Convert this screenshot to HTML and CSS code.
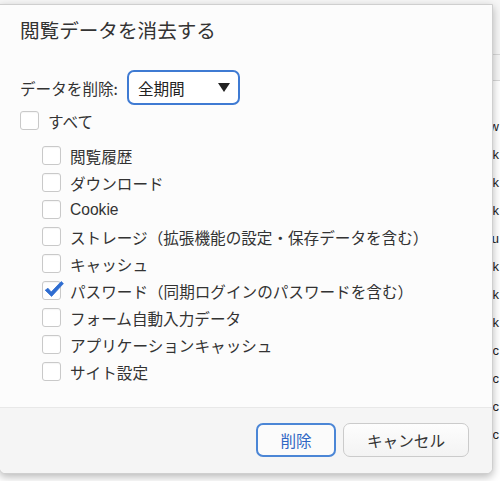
FILE: index.html
```html
<!DOCTYPE html>
<html lang="ja">
<head>
<meta charset="utf-8">
<link rel="stylesheet" href="styles.css">
</head>
<body>
<div class="page">
  <div class="page-top"></div>
  <div class="page-bar"></div>
  <div class="page-list">
    <div class="page-row">w</div>
    <div class="page-row">ck</div>
    <div class="page-row">ck</div>
    <div class="page-row">ck</div>
    <div class="page-row">u</div>
    <div class="page-row">ck</div>
    <div class="page-row">ck</div>
    <div class="page-row">ck</div>
    <div class="page-row">:c</div>
    <div class="page-row">:c</div>
    <div class="page-row">:c</div>
    <div class="page-row">:c</div>
  </div>
  <div class="page-url">https://ww</div>
</div>

<div class="dialog">
  <div class="dialog-body">
    <h1 class="title">閲覧データを消去する</h1>
    <div class="range">
      <span class="range-label">データを削除:</span>
      <div class="select"><span>全期間</span><span class="arrow"></span></div>
    </div>
    <label class="item all"><span class="box"></span><span>すべて</span></label>
    <div class="items">
      <label class="item"><span class="box"></span><span>閲覧履歴</span></label>
      <label class="item"><span class="box"></span><span>ダウンロード</span></label>
      <label class="item"><span class="box"></span><span class="latin">Cookie</span></label>
      <label class="item"><span class="box"></span><span>ストレージ（拡張機能の設定・保存データを含む）</span></label>
      <label class="item"><span class="box"></span><span>キャッシュ</span></label>
      <label class="item"><span class="box"><svg class="check" viewBox="0 0 20 16" width="20" height="16"><path d="M1.2 9.2 L4 7.3 L7.2 11 L17.2 0.6 L19.4 2.6 L7.6 15.4 Z" fill="#2f6dd1" stroke="#2f6dd1" stroke-width="0.8" stroke-linejoin="round"/></svg></span><span>パスワード（同期ログインのパスワードを含む）</span></label>
      <label class="item"><span class="box"></span><span>フォーム自動入力データ</span></label>
      <label class="item"><span class="box"></span><span>アプリケーションキャッシュ</span></label>
      <label class="item"><span class="box"></span><span>サイト設定</span></label>
    </div>
  </div>
  <div class="dialog-footer">
    <button class="btn primary">削除</button>
    <button class="btn">キャンセル</button>
  </div>
</div>
</body>
</html>
```

FILE: styles.css
```css
* { box-sizing: border-box; }
html, body { margin: 0; padding: 0; }
body {
  width: 500px;
  height: 481px;
  overflow: hidden;
  background: #ffffff;
  font-family: "Liberation Sans", "Noto Sans CJK JP", sans-serif;
  color: #333;
  position: relative;
}

.page { width: 500px; height: 481px; }
.page-top { height: 55px; background: #f6f6f6; border-bottom: 1px solid #d8d8d8; }
.page-bar { height: 26px; background: #f6f6f6; border-bottom: 1px solid #d8d8d8; }
.page-list { padding-top: 32px; padding-left: 485px; }
.page-row { height: 28px; line-height: 28px; font-size: 13px; color: #222; white-space: nowrap; text-align: right; padding-right: 1px; }
.page-url { padding-left: 415px; font-size: 13px; color: #222; margin-top: 2px; line-height: 16px; }

.dialog {
  position: absolute;
  left: -1px;
  top: 4px;
  width: 494px;
  height: 470px;
  background: #fcfcfc;
  border: 1px solid #cfcfcf;
  border-radius: 0 0 6px 6px;
  box-shadow: 0 3px 9px rgba(0,0,0,0.28);
  display: flex;
  flex-direction: column;
}
.dialog-body { flex: 1; padding: 11px 0 0 20px; }
.title {
  margin: 0;
  font-family: "Noto Sans CJK JP", sans-serif;
  font-size: 19.6px;
  font-weight: 400;
  line-height: 28px;
  color: #333;
}
.range { display: flex; align-items: center; margin-top: 26px; }
.range-label { font-size: 15.6px; font-family: "Noto Sans CJK JP", sans-serif; color: #333; }
.select {
  margin-left: 9px;
  width: 113px;
  height: 35px;
  border: 2px solid #3f7bd3;
  border-radius: 7px;
  background: #fff;
  display: flex;
  align-items: center;
  justify-content: space-between;
  padding: 0 8px 0 9px;
  font-size: 15.6px;
  font-family: "Noto Sans CJK JP", sans-serif;
  color: #222;
}
.arrow {
  width: 0; height: 0;
  border-left: 6px solid transparent;
  border-right: 6px solid transparent;
  border-top: 9px solid #222;
}
.item {
  display: flex;
  align-items: center;
  height: 27px;
  font-size: 15.6px;
  font-family: "Noto Sans CJK JP", sans-serif;
  color: #333;
  gap: 9px;
}
.item.all { margin-top: 2px; }
.items { padding-left: 22px; margin-top: 8px; }
.latin { font-family: "Liberation Sans", sans-serif; }
.box {
  width: 19px;
  height: 19px;
  border: 1px solid #c9c9c9;
  border-radius: 3px;
  background: #fff;
  box-shadow: inset 0 1px 1px rgba(0,0,0,0.04);
  position: relative;
  flex: none;
}
.check { position: absolute; left: 1px; top: -1px; }

.dialog-footer {
  height: 66px;
  border-top: 1px solid #e8e8e8;
  background: #f5f5f5;
  border-radius: 0 0 6px 6px;
  display: flex;
  justify-content: flex-end;
  align-items: flex-start;
  gap: 7px;
  padding: 15px 23px 0 0;
}
.btn {
  height: 34px;
  width: 126px;
  border: 1px solid #cbcbcb;
  border-radius: 7px;
  background: linear-gradient(#fdfdfd, #f3f3f3);
  font-family: "Noto Sans CJK JP", sans-serif;
  font-size: 15.6px;
  color: #333;
  padding: 0;
}
.btn.primary {
  width: 80px;
  border: 2px solid #4b86d6;
  color: #2f67c4;
  background: #fbfbfb;
}
```
